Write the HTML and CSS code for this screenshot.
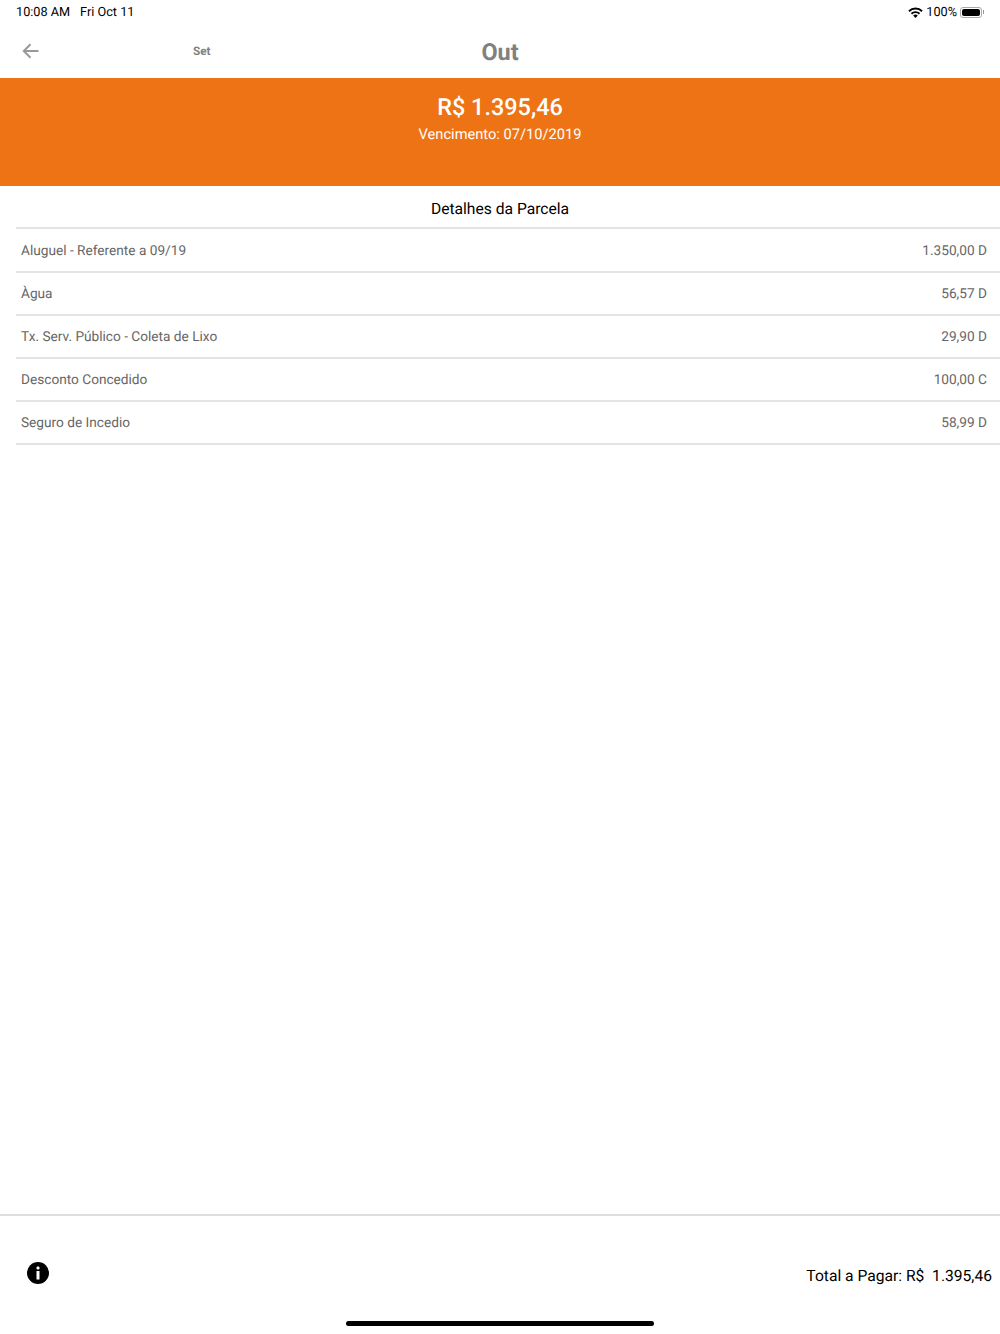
FILE: index.html
```html
<!DOCTYPE html>
<html lang="pt-BR">
<head>
    <meta charset="UTF-8">
    <meta name="viewport" content="width=device-width, initial-scale=1.0">
    <title>Detalhes da Parcela</title>
    <link rel="stylesheet" href="styles.css">
</head>
<body>
    <div class="app">
        <!-- Status bar -->
        <div class="status-bar">
            <div class="status-time">
                <span>10:08 AM</span>
                <span>Fri Oct 11</span>
            </div>
            <div class="status-icons">
                <svg class="wifi" width="15" height="11" viewBox="0 0 15 11">
                    <path d="M0.3 3.6A10.2 10.2 0 0 1 14.7 3.6L13.4 5A8.3 8.3 0 0 0 1.6 5Z" fill="#000"/>
                    <path d="M2.8 6.1A6.7 6.7 0 0 1 12.2 6.1L10.9 7.4A4.9 4.9 0 0 0 4.1 7.4Z" fill="#000"/>
                    <path d="M5.2 8.5A3.3 3.3 0 0 1 9.8 8.5L7.5 10.9Z" fill="#000"/>
                </svg>
                <span>100%</span>
                <div class="battery"><div class="battery-level"></div></div>
                <div class="battery-tip"></div>
            </div>
        </div>

        <!-- Nav bar -->
        <div class="nav-bar">
            <svg class="back" width="18" height="16" viewBox="0 0 18 16">
                <path d="M16.5 8H2M8.5 1.2L1.8 8L8.5 14.8" fill="none" stroke="#999" stroke-width="2"/>
            </svg>
            <span class="nav-prev">Set</span>
            <span class="nav-title">Out</span>
        </div>

        <!-- Banner -->
        <div class="banner">
            <div class="banner-value">R$ 1.395,46</div>
            <div class="banner-date">Vencimento: 07/10/2019</div>
        </div>

        <!-- Details -->
        <div class="details">
            <h3 class="details-title">Detalhes da Parcela</h3>
            <ul class="details-list">
                <li class="details-item"><span>Aluguel - Referente a 09/19</span><span>1.350,00 D</span></li>
                <li class="details-item"><span>Àgua</span><span>56,57 D</span></li>
                <li class="details-item"><span>Tx. Serv. Público - Coleta de Lixo</span><span>29,90 D</span></li>
                <li class="details-item"><span>Desconto Concedido</span><span>100,00 C</span></li>
                <li class="details-item"><span>Seguro de Incedio</span><span>58,99 D</span></li>
            </ul>
        </div>

        <!-- Footer -->
        <div class="footer">
            <div class="footer-row">
                <svg class="info" width="24" height="24" viewBox="0 0 24 24">
                    <circle cx="12" cy="12" r="11" fill="#000"/>
                    <rect x="10.5" y="5.5" width="3" height="3" rx="1.2" fill="#fff"/>
                    <rect x="10.5" y="10" width="3" height="8.5" fill="#fff"/>
                </svg>
                <span class="total">Total a Pagar: R$&nbsp; 1.395,46</span>
            </div>
            <div class="home-indicator"></div>
        </div>
    </div>
</body>
</html>
```

FILE: styles.css
```css
body {
    font-family: Roboto, "Liberation Sans", sans-serif;
    text-rendering: geometricPrecision;
    background-color: #fff;
    margin: 0;
}

.app {
    height: 1334px;
    display: flex;
    flex-direction: column;
    overflow: hidden;
}

.status-bar {
    height: 24px;
    padding: 0 16px;
    display: flex;
    align-items: center;
    justify-content: space-between;
    font-size: 12.7px;
    color: #000;
}

.status-time {
    display: flex;
    gap: 10px;
}

.status-icons {
    display: flex;
    align-items: center;
}

.wifi {
    margin-right: 3px;
}

.battery {
    width: 22px;
    height: 11px;
    margin-left: 3px;
    padding: 1px;
    border: 1px solid #aaa;
    border-radius: 3px;
    box-sizing: border-box;
}

.battery-level {
    height: 100%;
    background: #000;
    border-radius: 2px;
}

.battery-tip {
    width: 1px;
    height: 4px;
    margin-left: 1px;
    background: #999;
}

.nav-bar {
    height: 54px;
    position: relative;
    display: flex;
    align-items: center;
    justify-content: center;
}

.back {
    position: absolute;
    left: 22px;
    top: 19px;
}

.nav-prev {
    position: absolute;
    left: 193px;
    top: 20px;
    font-size: 11.72px;
    font-weight: 700;
    color: #808080;
}

.nav-title {
    margin-top: 2px;
    font-size: 23.44px;
    font-weight: 700;
    color: #808080;
}

.banner {
    height: 108px;
    background-color: #ee7314;
    color: #fff;
    text-align: center;
    box-sizing: border-box;
    padding-top: 15px;
}

.banner-value {
    font-size: 23.44px;
    font-weight: 500;
    line-height: 28px;
}

.banner-date {
    font-size: 14.65px;
    line-height: 18px;
    margin-top: 4px;
}

.details {
    flex: 1;
    padding: 0 0 0 16px;
}

.details-title {
    margin: 0 0 0 -16px;
    height: 41px;
    line-height: 46px;
    text-align: center;
    font-size: 15.63px;
    font-weight: 400;
    color: #000;
}

.details-list {
    list-style-type: none;
    margin: 0;
    padding: 0;
    border-top: 2px solid #e4e4e4;
}

.details-item {
    height: 41px;
    padding: 0 13px 0 5px;
    display: flex;
    align-items: center;
    justify-content: space-between;
    font-size: 13.67px;
    color: #666;
    border-bottom: 2px solid #e4e4e4;
}

.details-item:first-child {
    padding-top: 1px;
}

.footer {
    height: 118px;
    border-top: 2px solid #ddd;
    display: flex;
    flex-direction: column;
}

.footer-row {
    height: 99px;
    padding: 15px 8px 0 26px;
    display: flex;
    align-items: center;
    justify-content: space-between;
    box-sizing: border-box;
}

.total {
    margin-top: 4px;
    font-size: 15.63px;
    color: #000;
}

.home-indicator {
    width: 308px;
    height: 5px;
    margin: 6px auto 0;
    background: #000;
    border-radius: 3px;
}
```
